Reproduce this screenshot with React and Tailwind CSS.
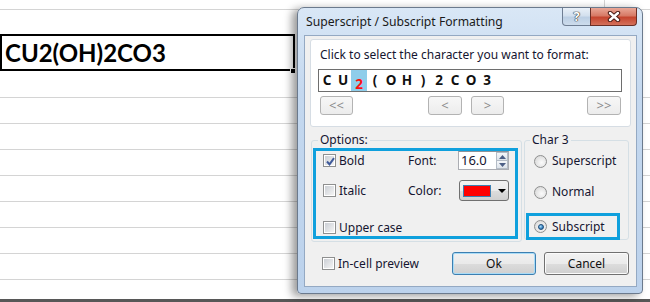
import React from "react";

function CheckBox({ checked }) {
  return (
    <span className="relative flex h-[13px] w-[13px] shrink-0 items-center justify-center border border-[#8e8f8f] bg-white">
      <span className="h-[9px] w-[9px] bg-[linear-gradient(135deg,#cbcfd5,#f4f4f4)]" />
      {checked && (
        <svg className="absolute left-[1px] top-[1px]" width="11" height="11" viewBox="0 0 11 11">
          <path d="M2 5.5 L4.5 8.3 L9 2.2" fill="none" stroke="#3f5a9a" strokeWidth="2" />
        </svg>
      )}
    </span>
  );
}

function Radio({ checked }) {
  return (
    <span className="flex h-[13px] w-[13px] shrink-0 items-center justify-center rounded-full border border-[#8e8f8f] bg-[radial-gradient(circle_at_60%_60%,#fbfbfb,#d2d2d2)]">
      {checked && (
        <span className="h-[6px] w-[6px] rounded-full border border-[#1b4a78] bg-[radial-gradient(circle_at_35%_35%,#a9dcfb,#2d79b8_70%)]" />
      )}
    </span>
  );
}

function Btn({ children, className, def, disabled }) {
  const look = disabled
    ? "border-[#b3b3b3] bg-[linear-gradient(#f7f7f7,#ececec)] text-[#8a8a8a]"
    : def
    ? "border-[#3c7fb1] shadow-[inset_0_0_0_1px_#a9dcf7] bg-[linear-gradient(#f1f1f1_0%,#eaeaea_50%,#dcdcdc_51%,#d0d0d0_100%)] text-[#111]"
    : "border-[#707070] shadow-[inset_0_0_0_1px_#fbfbfb] bg-[linear-gradient(#f2f2f2_0%,#ebebeb_50%,#dddddd_51%,#cfcfcf_100%)] text-[#111]";
  return (
    <div className={"flex shrink-0 items-center justify-center rounded-[3px] border " + look + " " + className}>
      {children}
    </div>
  );
}

const chars = ["C", "U", "2", "(", "O", "H", ")", "2", "C", "O", "3"];

function SheetRow({ h, line, children }) {
  return (
    <div className={"flex shrink-0 " + h + (line ? " border-b border-[#d4d4d4]" : "")}>
      <div className="relative w-[605px] shrink-0 border-r border-[#d4d4d4]">{children}</div>
      <div className="flex-1" />
    </div>
  );
}

export default function App() {
  return (
    <div className="relative flex h-[302px] w-[650px] flex-col overflow-hidden bg-white">
      {/* spreadsheet */}
      <div className="flex flex-1 flex-col">
        <SheetRow h="h-[10px]" line />
        <SheetRow h="h-[24px]" />
        <SheetRow h="h-[37px]">
          <div className="relative flex h-[37px] w-[295px] items-center border-2 border-black pl-[3px]">
            <span className="font-['Lato',sans-serif] text-[24px] font-bold leading-none text-black">
              CU2(OH)2CO3
            </span>
            <div className="absolute bottom-[-5px] right-[-3px] h-[6px] w-[6px] border border-white bg-black" />
          </div>
        </SheetRow>
        <SheetRow h="h-[27px]" line />
        <SheetRow h="h-[26px]" line />
        <SheetRow h="h-[26px]" line />
        <SheetRow h="h-[26px]" line />
        <SheetRow h="h-[26px]" line />
        <SheetRow h="h-[26px]" line />
        <SheetRow h="h-[26px]" line />
        <SheetRow h="h-[26px]" line />
      </div>
      <div className="h-[3px] shrink-0 bg-[#575757]" />

      {/* dialog window */}
      <div className="absolute left-[297px] top-[7px] flex h-[287px] w-[346px] flex-col rounded-b-[4px] rounded-t-[7px] border border-[#6b7a8d] bg-[linear-gradient(#d9e7f6,#c4d8ef_30%,#bcd2ec)] font-['Noto_Sans',sans-serif] text-[12px] text-[#151530] shadow-[-5px_2px_9px_rgba(0,0,0,0.4)]">
        {/* title bar */}
        <div className="flex h-[27px] shrink-0 items-start">
          <div className="flex h-[27px] flex-1 items-center pl-[8px] pt-[1px] text-[12.2px] text-[#1a1a1a]">
            Superscript / Subscript Formatting
          </div>
          <div className="flex h-[18px] w-[29px] items-center justify-center rounded-bl-[4px] border border-t-0 border-[#6f7e93] bg-[linear-gradient(#e9f0f8,#d3e0ee_45%,#bccfe4_55%,#cddcec)]">
            <span className="text-[13px] font-bold leading-none text-white [text-shadow:0_0_1px_#2a2a2a,0_0_1px_#2a2a2a,0_0_1px_#2a2a2a]">
              ?
            </span>
          </div>
          <div className="-ml-[1px] mr-[5px] flex h-[18px] w-[47px] items-center justify-center rounded-br-[4px] border border-t-0 border-[#6b2f26] bg-[linear-gradient(#e9a797,#d77a66_45%,#c5452f_55%,#d4715b)]">
            <svg width="14" height="11" viewBox="0 0 14 11">
              <path d="M3 2 L11 9 M11 2 L3 9" stroke="#4a1d17" strokeWidth="4.4" strokeLinecap="round" />
              <path d="M3 2 L11 9 M11 2 L3 9" stroke="#ffffff" strokeWidth="2.4" strokeLinecap="round" />
            </svg>
          </div>
        </div>

        {/* client area */}
        <div className="ml-[6px] flex h-[252px] w-[333px] flex-col border border-[#94a9c3] bg-[#f0f0f0]">
          {/* top panel */}
          <div className="ml-[5px] mt-[3px] flex h-[88px] w-[321px] flex-col rounded-[3px] border border-[#d6dde4] bg-white">
            <div className="ml-[9px] mt-[6px] h-[18px] leading-[18px]">
              Click to select the character you want to format:
            </div>
            <div className="ml-[7px] mt-[5px] flex h-[23px] w-[304px] border border-[#6e6e6e]">
              {chars.map((c, i) =>
                i === 2 ? (
                  <span
                    key={i}
                    className="flex h-full w-[16px] items-center justify-center bg-[#8fcdea] pt-[7px] text-[13.5px] font-bold text-[#ff1010]"
                  >
                    {c}
                  </span>
                ) : (
                  <span
                    key={i}
                    className="flex h-full w-[16px] items-center justify-center text-[13.5px] font-bold text-[#101010]"
                  >
                    {c}
                  </span>
                )
              )}
            </div>
            <div className="ml-[9px] mt-[4px] flex h-[19px] items-center text-[13px]">
              <Btn disabled className="h-[19px] w-[33px]">&lt;&lt;</Btn>
              <Btn disabled className="ml-[75px] h-[19px] w-[34px]">&lt;</Btn>
              <Btn disabled className="ml-[9px] h-[19px] w-[33px]">&gt;</Btn>
              <Btn disabled className="ml-[83px] h-[19px] w-[34px]">&gt;&gt;</Btn>
            </div>
          </div>

          {/* groups */}
          <div className="mt-[6px] flex items-start">
            <fieldset className="ml-[6px] h-[109px] w-[211px] rounded-[3px] border border-[#d5dfe5]">
              <legend className="ml-[6px] px-[2px] leading-[14px]">Options:</legend>
              <div className="ml-[1px] mt-[1px] flex h-[91px] w-[205px] flex-col border-[3px] border-[#0fa0dd] pl-[7px]">
                <div className="flex h-[19px] items-center">
                  <div className="flex w-[85px] items-center gap-[3px]">
                    <CheckBox checked />
                    <span>Bold</span>
                  </div>
                  <div className="w-[50px]">Font:</div>
                  <div className="flex h-[19px] w-[51px] border border-[#abadb3] border-t-[#8e9399] bg-white">
                    <div className="flex flex-1 items-center pl-[2px] text-[13px] leading-none">16.0</div>
                    <div className="flex w-[12px] flex-col">
                      <div className="flex flex-1 items-center justify-center border border-[#b4bcc6] bg-[linear-gradient(#f5f7fa,#dde3ea)]">
                        <svg width="7" height="4" viewBox="0 0 7 4"><path d="M0 4 L3.5 0 L7 4Z" fill="#4c5f86" /></svg>
                      </div>
                      <div className="flex flex-1 items-center justify-center border border-t-0 border-[#b4bcc6] bg-[linear-gradient(#f5f7fa,#dde3ea)]">
                        <svg width="7" height="4" viewBox="0 0 7 4"><path d="M0 0 L3.5 4 L7 0Z" fill="#4c5f86" /></svg>
                      </div>
                    </div>
                  </div>
                </div>
                <div className="mt-[10px] flex h-[21px] items-center">
                  <div className="flex w-[85px] items-center gap-[3px]">
                    <CheckBox />
                    <span>Italic</span>
                  </div>
                  <div className="w-[51px]">Color:</div>
                  <div className="flex h-[21px] w-[50px] items-center rounded-[3px] border border-[#707070] bg-[linear-gradient(#f2f2f2_0%,#ebebeb_50%,#dddddd_51%,#cfcfcf_100%)] pl-[3px]">
                    <div className="h-[12px] w-[28px] border border-[#3c7fb1] bg-[#ff0000]" />
                    <svg className="ml-[7px]" width="8" height="4" viewBox="0 0 8 4"><path d="M0 0 L8 0 L4 4Z" fill="#000" /></svg>
                  </div>
                </div>
                <div className="mt-[19px] flex h-[15px] items-center gap-[3px]">
                  <CheckBox />
                  <span>Upper case</span>
                </div>
              </div>
            </fieldset>

            <fieldset className="ml-[2px] h-[107px] w-[105px] rounded-[3px] border border-[#d5dfe5]">
              <legend className="ml-[5px] px-[2px] leading-[14px]">Char 3</legend>
              <div className="ml-[9px] mt-[4px] flex h-[20px] items-center gap-[5px]">
                <Radio />
                <span>Superscript</span>
              </div>
              <div className="ml-[9px] mt-[11px] flex h-[20px] items-center gap-[5px]">
                <Radio />
                <span>Normal</span>
              </div>
              <div className="ml-[1px] mt-[11px] flex h-[27px] w-[94px] items-center gap-[5px] border-[3px] border-[#0fa0dd] pl-[5px]">
                <Radio checked />
                <span>Subscript</span>
              </div>
            </fieldset>
          </div>

          {/* bottom row */}
          <div className="mt-[10px] flex h-[23px] items-center pl-[17px]">
            <div className="flex items-center gap-[3px]">
              <CheckBox />
              <span>In-cell preview</span>
            </div>
            <Btn def className="ml-auto h-[23px] w-[84px]">Ok</Btn>
            <Btn className="ml-[8px] mr-[7px] h-[23px] w-[85px]">Cancel</Btn>
          </div>
        </div>
      </div>
    </div>
  );
}
